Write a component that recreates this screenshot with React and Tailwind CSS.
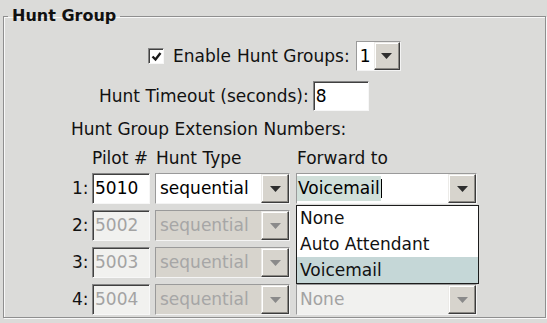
import clsx from 'clsx';

const sunken =
    'border border-t-[#858585] border-l-[#858585] border-b-[#f7f7f7] border-r-[#f7f7f7] shadow-[inset_1px_1px_0_#404040]';

function Arrow({ dim }) {
    return (
        <svg width="11" height="6" viewBox="0 0 11 6">
            <path d="M0 0h11L5.5 6z" fill={dim ? '#8a8a8a' : '#2e2e2e'} />
        </svg>
    );
}

function Btn({ dim, className }) {
    return (
        <div
            className={clsx(
                'flex items-center justify-center bg-[#d7d4cd] border border-t-[#ecebe8] border-l-[#ecebe8] border-b-[#3c3c3c] border-r-[#3c3c3c] shadow-[inset_-1px_-1px_0_#8c8a85,inset_1px_1px_0_#ffffff]',
                className
            )}
        >
            <Arrow dim={dim} />
        </div>
    );
}

function Input({ value, disabled, className }) {
    return (
        <div
            className={clsx(
                'flex items-center pl-[2px] h-full',
                sunken,
                disabled ? 'bg-[#f1f1ef] text-[#a3a3a3]' : 'bg-white text-black',
                className
            )}
        >
            {value}
        </div>
    );
}

function Select({ value, disabled, fieldClass, className, btnClass = 'w-[28px]', children }) {
    return (
        <div className={clsx('relative flex h-full border border-[#9a9a9a] border-b-[#f4f4f4] border-r-[#f4f4f4]', className)}>
            <div
                className={clsx(
                    'flex-1 flex items-center',
                    fieldClass ?? (disabled ? 'bg-[#d7d4cd] text-[#a6a6a6] pl-[4px]' : 'bg-white text-black pl-[4px]')
                )}
            >
                {value}
            </div>
            <Btn dim={disabled} className={btnClass} />
            {children}
        </div>
    );
}

const rows = [
    { n: '2', pilot: '5002' },
    { n: '3', pilot: '5003' },
    { n: '4', pilot: '5004' },
];

export default function App() {
    return (
        <div className="w-[547px] h-[323px] overflow-hidden bg-[#dbdbd9] text-[#111] text-[17px] leading-none font-['DejaVu_Sans',Verdana,sans-serif]">
            <fieldset className="ml-[3px] mt-[7px] w-[543px] h-[311px] border border-[#8f8f8f] shadow-[inset_1px_1px_0_#f8f8f8,1px_1px_0_#f8f8f8]">
                <legend className="ml-[4px] px-[4px] h-[18px] text-[16px] font-bold leading-[18px]">Hunt Group</legend>

                <div className="flex items-center h-[30px] mt-[16px] pl-[144px]">
                    <div className={clsx('w-[16px] h-[16px] bg-white flex items-center justify-center', sunken)}>
                        <svg width="11" height="11" viewBox="0 0 11 11">
                            <path d="M1.5 5.5l3 3L9.5 2" stroke="#1a1a1a" strokeWidth="2.4" fill="none" />
                        </svg>
                    </div>
                    <span className="ml-[9px]">Enable</span>
                    <span className="ml-[6px]">Hunt Groups:</span>
                    <Select
                        value="1"
                        className="ml-[6px] w-[45px]"
                        btnClass="w-[26px]"
                        fieldClass="bg-white text-black pl-[3px]"
                    />
                </div>

                <div className="flex items-center h-[30px] mt-[10px] pl-[95px]">
                    <span>Hunt Timeout (seconds):</span>
                    <Input value="8" className="ml-[4px] w-[56px]" />
                </div>

                <div className="flex items-center h-[20px] mt-[8px] pl-[67px]">Hunt Group Extension Numbers:</div>

                <div className="flex items-center h-[20px] mt-[9px] pl-[68px]">
                    <span className="w-[20px]" />
                    <span className="w-[63px]">Pilot #</span>
                    <span className="w-[141px] pl-[1px]">Hunt Type</span>
                    <span className="pl-[1px]">Forward to</span>
                </div>

                <div className="flex items-center h-[31px] mt-[5px] pl-[68px]">
                    <span className="w-[20px]">1:</span>
                    <Input value="5010" className="w-[58px]" />
                    <Select value="sequential" className="ml-[5px] w-[135px]" />
                    <Select
                        className="ml-[6px] w-[181px]"
                        fieldClass="bg-white text-black"
                        value={
                            <div className="flex items-stretch h-full py-[2px]">
                                <span className="flex items-center pl-[1px] pr-[1px] bg-[#d1e0da]">Voicemail</span>
                                <span className="w-[1px] my-[3px] bg-black" />
                            </div>
                        }
                    >
                        <div className="absolute left-[-1px] top-[31px] w-[183px] bg-white border border-[#1c1c1c] z-10">
                            <div className="h-[25px] flex items-center pl-[3px]">None</div>
                            <div className="h-[26px] flex items-center pl-[3px]">Auto Attendant</div>
                            <div className="h-[26px] flex items-center pl-[3px] bg-[#c5d7d7]">Voicemail</div>
                        </div>
                    </Select>
                </div>

                {rows.map((r, i) => (
                    <div key={r.n} className="flex items-center h-[31px] mt-[6px] pl-[68px]">
                        <span className="w-[20px]">{r.n}:</span>
                        <Input value={r.pilot} disabled className="w-[58px]" />
                        <Select value="sequential" disabled className="ml-[5px] w-[135px]" />
                        <Select
                            value={i === 2 ? 'None' : ''}
                            disabled
                            fieldClass="bg-[#f1f1ef] text-[#a3a3a3] pl-[3px]"
                            className="ml-[6px] w-[181px]"
                        />
                    </div>
                ))}
            </fieldset>
        </div>
    );
}
